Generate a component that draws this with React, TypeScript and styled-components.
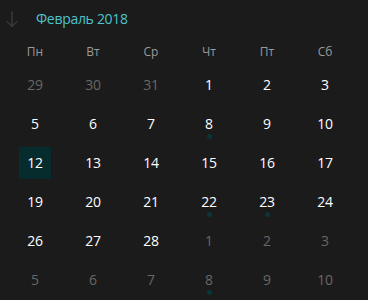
import styled, { createGlobalStyle } from "styled-components";

const GlobalStyle = createGlobalStyle`
  html, body {
    margin: 0;
    padding: 0;
    background: #1b1b1b;
  }
`;

const Wrapper = styled.div`
  width: 368px;
  height: 300px;
  background: #1b1b1b;
  font-family: "Open Sans", "Noto Sans", sans-serif;
  overflow: hidden;
`;

const Header = styled.div`
  height: 38px;
  display: flex;
  align-items: center;
  gap: 17px;
  padding-left: 5px;
`;

const Title = styled.span`
  color: #4cc3cc;
  font-size: 14px;
  letter-spacing: -0.3px;
  line-height: 1;
`;

const Grid = styled.div`
  display: grid;
  grid-template-columns: repeat(6, 58px);
  margin-left: 6px;
`;

const WeekDay = styled.div`
  height: 27px;
  display: flex;
  align-items: center;
  justify-content: center;
  color: #9a9a9a;
  font-size: 12px;
`;

const Cell = styled.div`
  position: relative;
  height: 39px;
  display: flex;
  align-items: center;
  justify-content: center;
`;

const Day = styled.div<{ $muted?: boolean; $today?: boolean }>`
  width: 32px;
  height: 32px;
  display: flex;
  align-items: center;
  justify-content: center;
  font-size: 14px;
  letter-spacing: -0.2px;
  color: ${(p) => (p.$muted ? "#676767" : "#ffffff")};
  background: ${(p) => (p.$today ? "#072c2e" : "transparent")};
`;

const Dot = styled.span`
  position: absolute;
  left: 50%;
  top: 30px;
  width: 5px;
  height: 5px;
  margin-left: -2px;
  border-radius: 50%;
  background: #093638;
`;

const weekDays = ["Пн", "Вт", "Ср", "Чт", "Пт", "Сб"];

type DayItem = { n: number; muted?: boolean; dot?: boolean; today?: boolean };

const rows: DayItem[][] = [
  [{ n: 29, muted: true }, { n: 30, muted: true }, { n: 31, muted: true }, { n: 1 }, { n: 2 }, { n: 3 }],
  [{ n: 5 }, { n: 6 }, { n: 7 }, { n: 8, dot: true }, { n: 9 }, { n: 10 }],
  [{ n: 12, today: true }, { n: 13 }, { n: 14 }, { n: 15 }, { n: 16 }, { n: 17 }],
  [{ n: 19 }, { n: 20 }, { n: 21 }, { n: 22, dot: true }, { n: 23, dot: true }, { n: 24 }],
  [{ n: 26 }, { n: 27 }, { n: 28 }, { n: 1, muted: true }, { n: 2, muted: true }, { n: 3, muted: true }],
  [{ n: 5, muted: true }, { n: 6, muted: true }, { n: 7, muted: true }, { n: 8, muted: true, dot: true }, { n: 9, muted: true }, { n: 10, muted: true }],
];

function DownArrow() {
  return (
    <svg width="14" height="18" viewBox="0 0 14 18" fill="none">
      <path d="M7 1.5V16.5M1.5 11L7 16.5L12.5 11" stroke="#4a4a4a" strokeWidth="1" />
    </svg>
  );
}

export default function App() {
  return (
    <Wrapper>
      <GlobalStyle />
      <Header>
        <DownArrow />
        <Title>Февраль 2018</Title>
      </Header>
      <Grid>
        {weekDays.map((d) => (
          <WeekDay key={d}>{d}</WeekDay>
        ))}
        {rows.flat().map((d, i) => (
          <Cell key={i}>
            <Day $muted={d.muted} $today={d.today}>
              {d.n}
            </Day>
            {d.dot && <Dot />}
          </Cell>
        ))}
      </Grid>
    </Wrapper>
  );
}
